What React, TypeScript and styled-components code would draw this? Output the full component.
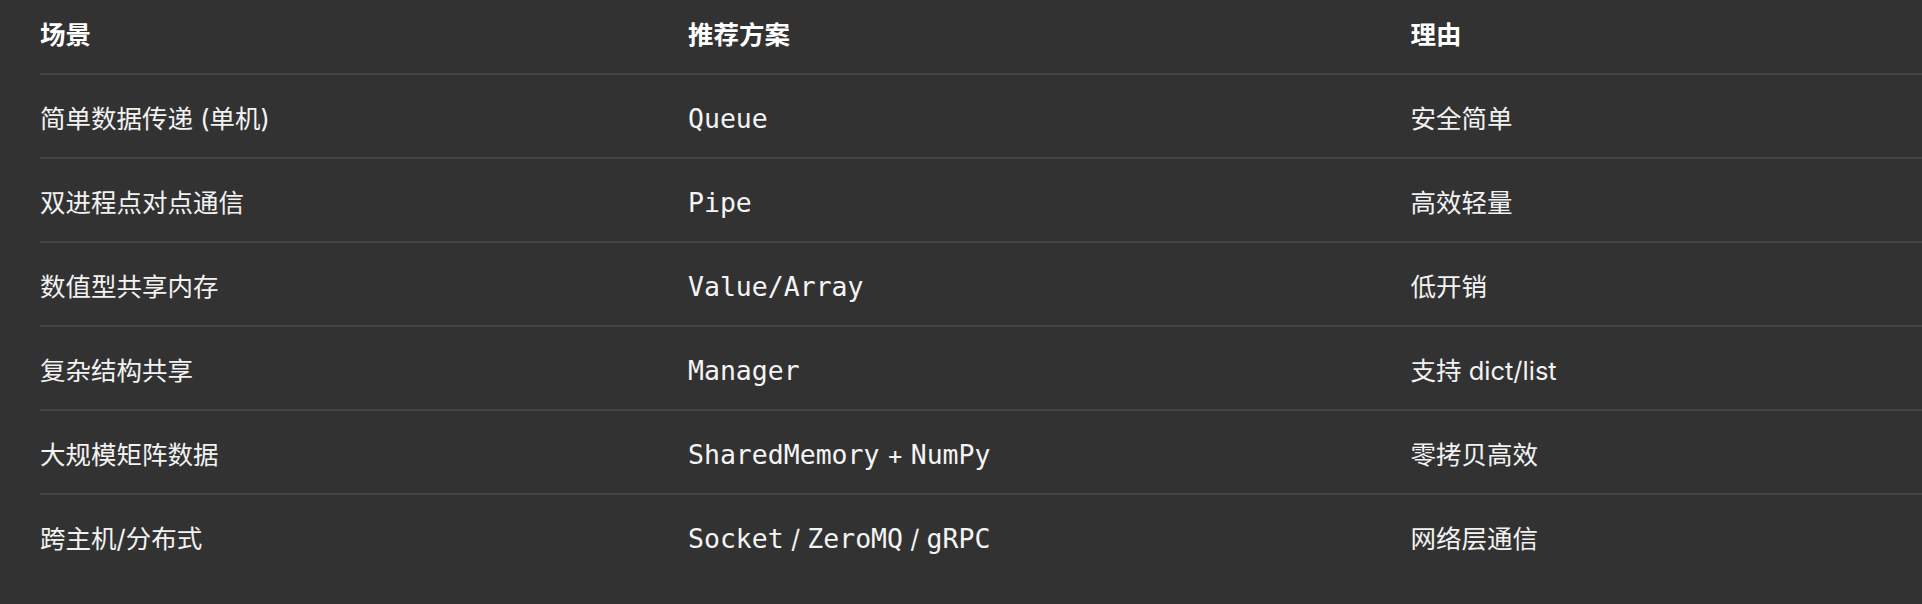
import React from "react";
import styled, { createGlobalStyle } from "styled-components";

const Global = createGlobalStyle`
  html, body {
    margin: 0;
    padding: 0;
    background: #323232;
    overflow: hidden;
  }
  body {
    font-family: Inter, "Noto Sans CJK SC", sans-serif;
    color: #f4f4f4;
  }
`;

const Page = styled.div`
  width: 1922px;
  height: 604px;
  padding-left: 40px;
  box-sizing: border-box;
  overflow: hidden;
`;

const Table = styled.table`
  width: 100%;
  margin-top: -9px;
  border-collapse: collapse;
  table-layout: fixed;
  font-size: 25.5px;
  line-height: 40px;
`;

const Row = styled.tr<{ $last?: boolean }>`
  border-bottom: ${(p) => (p.$last ? "none" : "2px solid #444444")};
`;

const HeadCell = styled.th`
  text-align: left;
  font-weight: 700;
  color: #ffffff;
  padding: 24px 0 18px 16px;
  white-space: nowrap;
  &:first-child {
    padding-left: 0;
  }
`;

const Cell = styled.td`
  text-align: left;
  font-weight: 400;
  color: #f2f2f2;
  padding: 24px 0 18px 16px;
  white-space: nowrap;
  &:first-child {
    padding-left: 0;
  }
`;

const Code = styled.code`
  font-family: "DejaVu Sans Mono", "Liberation Mono", monospace;
  font-size: 26.5px;
  color: #f4f4f4;
`;

type Part = { code?: string; text?: string };
type RowData = { scene: string; plan: Part[]; reason: string };

const rows: RowData[] = [
  { scene: "简单数据传递 (单机)", plan: [{ code: "Queue" }], reason: "安全简单" },
  { scene: "双进程点对点通信", plan: [{ code: "Pipe" }], reason: "高效轻量" },
  { scene: "数值型共享内存", plan: [{ code: "Value/Array" }], reason: "低开销" },
  { scene: "复杂结构共享", plan: [{ code: "Manager" }], reason: "支持 dict/list" },
  {
    scene: "大规模矩阵数据",
    plan: [{ code: "SharedMemory" }, { text: " + " }, { code: "NumPy" }],
    reason: "零拷贝高效",
  },
  {
    scene: "跨主机/分布式",
    plan: [{ code: "Socket" }, { text: " / " }, { code: "ZeroMQ" }, { text: " / " }, { code: "gRPC" }],
    reason: "网络层通信",
  },
];

export default function App() {
  return (
    <Page>
      <Global />
      <Table>
        <colgroup>
          <col style={{ width: "632px" }} />
          <col style={{ width: "722.5px" }} />
          <col />
        </colgroup>
        <thead>
          <Row>
            <HeadCell>场景</HeadCell>
            <HeadCell>推荐方案</HeadCell>
            <HeadCell>理由</HeadCell>
          </Row>
        </thead>
        <tbody>
          {rows.map((r, i) => (
            <Row key={r.scene} $last={i === rows.length - 1}>
              <Cell>{r.scene}</Cell>
              <Cell>
                {r.plan.map((p, j) =>
                  p.code ? <Code key={j}>{p.code}</Code> : <span key={j}>{p.text}</span>
                )}
              </Cell>
              <Cell>{r.reason}</Cell>
            </Row>
          ))}
        </tbody>
      </Table>
    </Page>
  );
}
